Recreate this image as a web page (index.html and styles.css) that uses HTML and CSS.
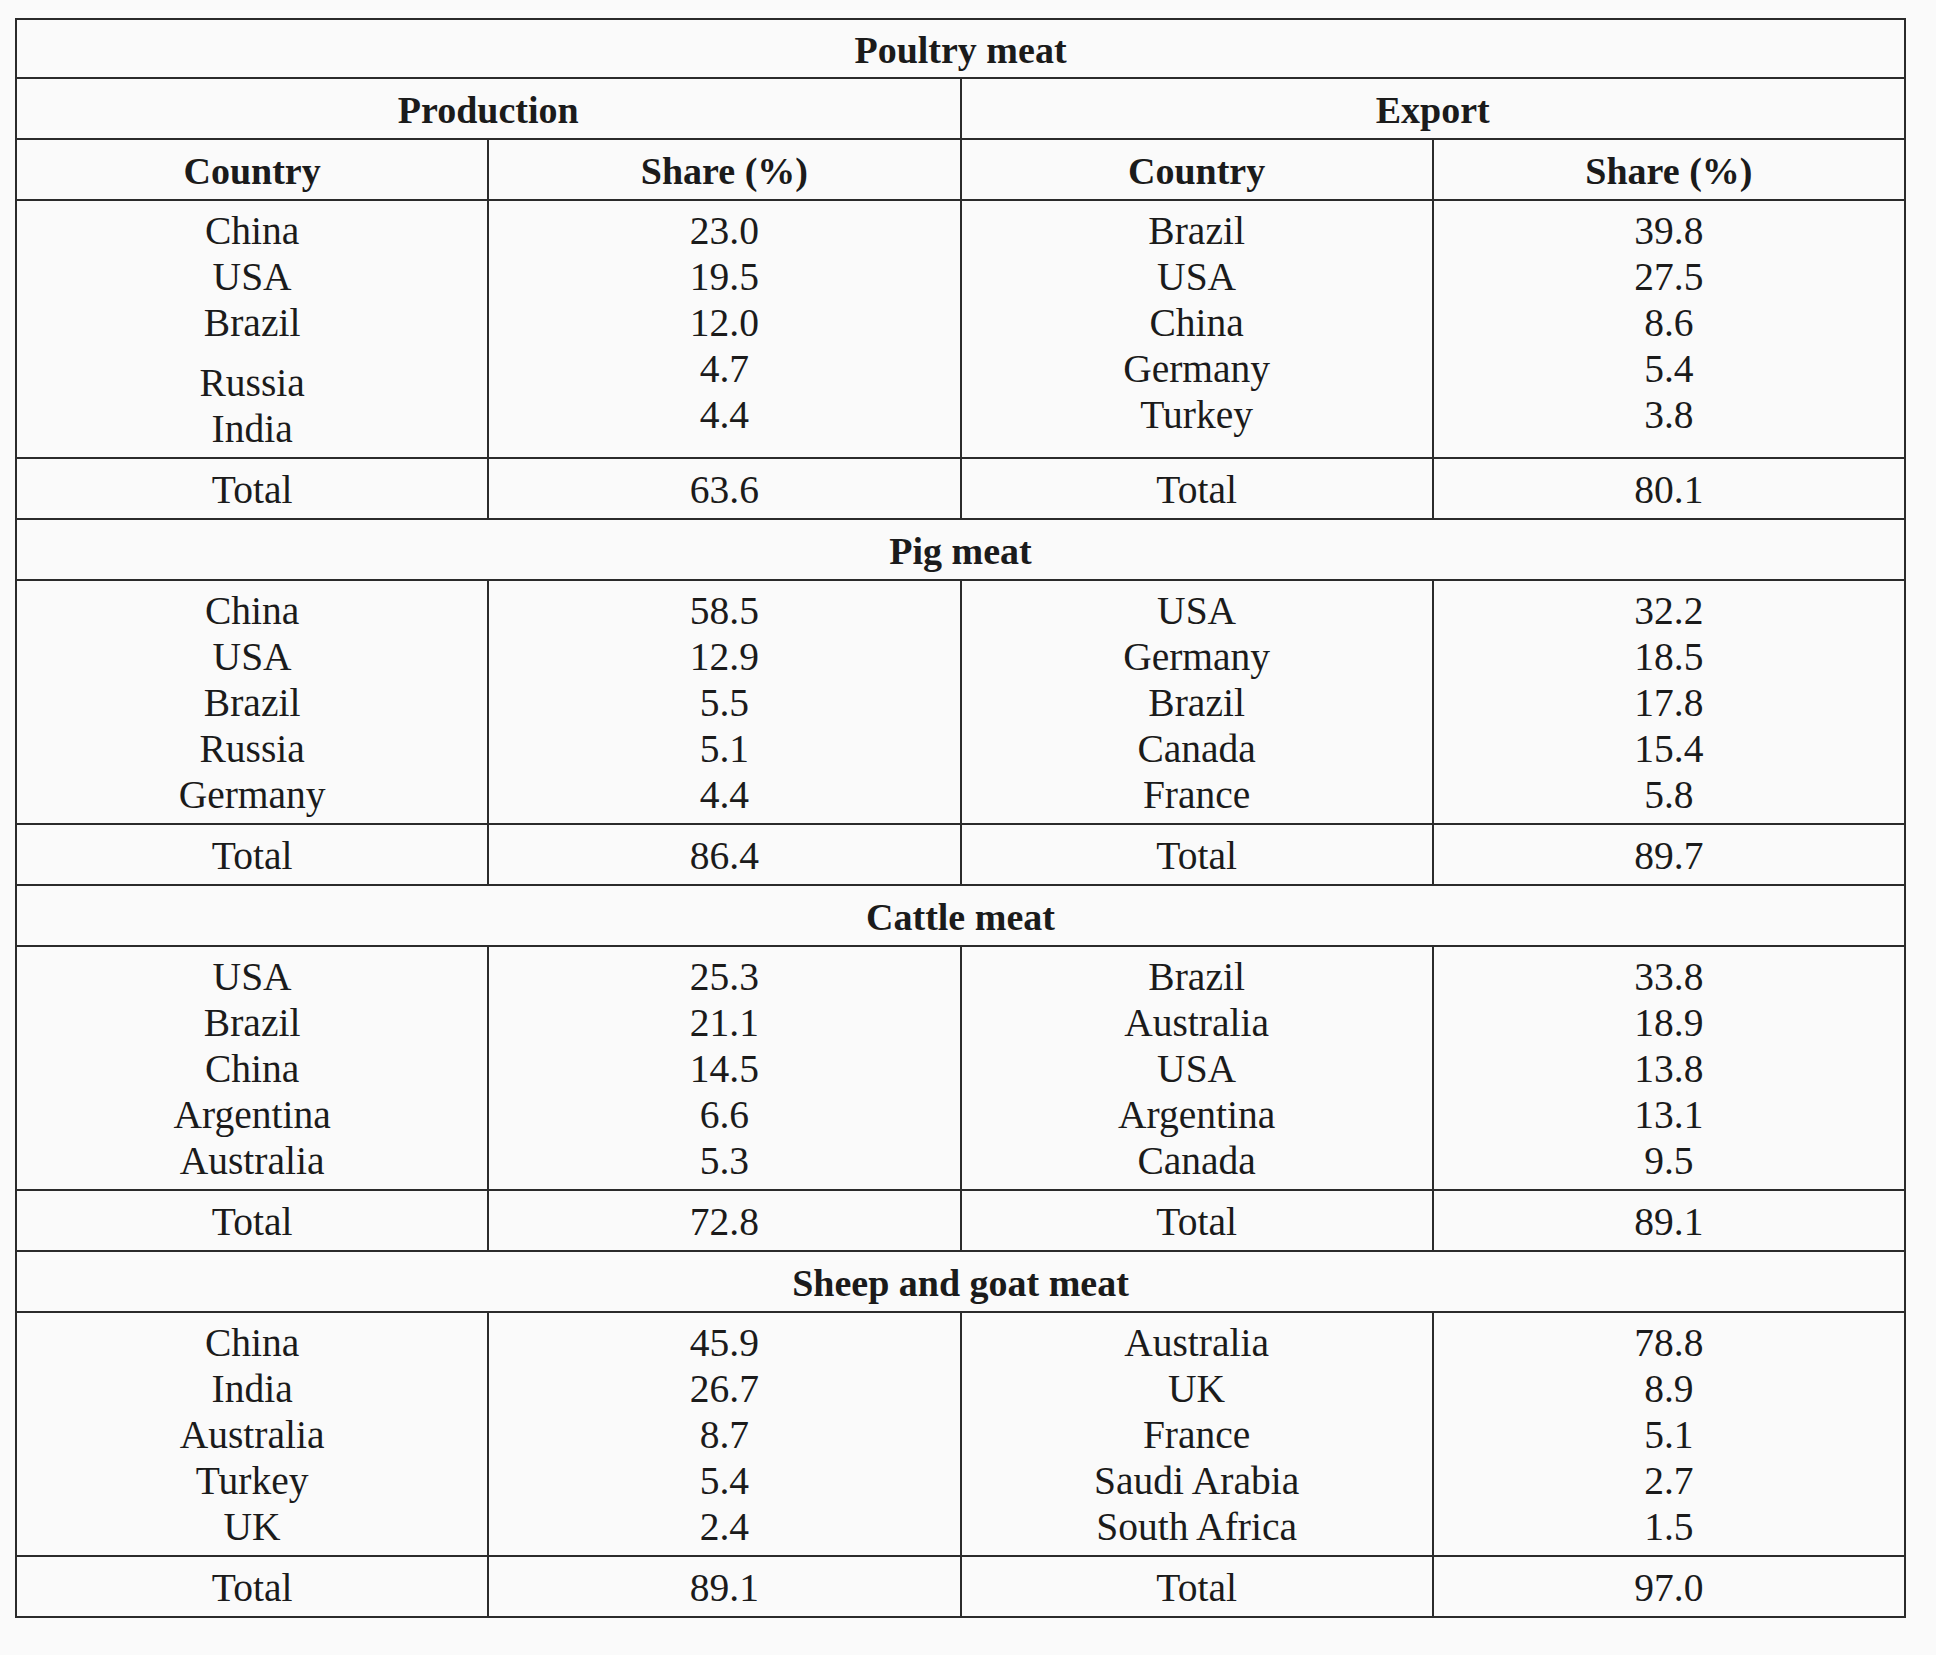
FILE: index.html
```html
<!DOCTYPE html>
<html lang="en">
<head>
<meta charset="utf-8">
<title>Meat production and export shares</title>
<link rel="stylesheet" href="styles.css">
</head>
<body>
<div class="page">
<table class="meat">
  <colgroup><col class="c"><col class="c"><col class="c"><col class="c"></colgroup>
  <tr class="first"><th colspan="4">Poultry meat</th></tr>
  <tr><th colspan="2">Production</th><th colspan="2">Export</th></tr>
  <tr><th>Country</th><th>Share (%)</th><th>Country</th><th>Share (%)</th></tr>
  <tr class="data">
    <td class="gap"><div>China</div><div>USA</div><div>Brazil</div><div class="shift">Russia</div><div>India</div></td>
    <td><div>23.0</div><div>19.5</div><div>12.0</div><div>4.7</div><div>4.4</div></td>
    <td><div>Brazil</div><div>USA</div><div>China</div><div>Germany</div><div>Turkey</div></td>
    <td><div>39.8</div><div>27.5</div><div>8.6</div><div>5.4</div><div>3.8</div></td>
  </tr>
  <tr class="total"><td>Total</td><td>63.6</td><td>Total</td><td>80.1</td></tr>

  <tr><th colspan="4">Pig meat</th></tr>
  <tr class="data">
    <td><div>China</div><div>USA</div><div>Brazil</div><div>Russia</div><div>Germany</div></td>
    <td><div>58.5</div><div>12.9</div><div>5.5</div><div>5.1</div><div>4.4</div></td>
    <td><div>USA</div><div>Germany</div><div>Brazil</div><div>Canada</div><div>France</div></td>
    <td><div>32.2</div><div>18.5</div><div>17.8</div><div>15.4</div><div>5.8</div></td>
  </tr>
  <tr class="total"><td>Total</td><td>86.4</td><td>Total</td><td>89.7</td></tr>

  <tr><th colspan="4">Cattle meat</th></tr>
  <tr class="data">
    <td><div>USA</div><div>Brazil</div><div>China</div><div>Argentina</div><div>Australia</div></td>
    <td><div>25.3</div><div>21.1</div><div>14.5</div><div>6.6</div><div>5.3</div></td>
    <td><div>Brazil</div><div>Australia</div><div>USA</div><div>Argentina</div><div>Canada</div></td>
    <td><div>33.8</div><div>18.9</div><div>13.8</div><div>13.1</div><div>9.5</div></td>
  </tr>
  <tr class="total"><td>Total</td><td>72.8</td><td>Total</td><td>89.1</td></tr>

  <tr><th colspan="4">Sheep and goat meat</th></tr>
  <tr class="data">
    <td><div>China</div><div>India</div><div>Australia</div><div>Turkey</div><div>UK</div></td>
    <td><div>45.9</div><div>26.7</div><div>8.7</div><div>5.4</div><div>2.4</div></td>
    <td><div>Australia</div><div>UK</div><div>France</div><div>Saudi Arabia</div><div>South Africa</div></td>
    <td><div>78.8</div><div>8.9</div><div>5.1</div><div>2.7</div><div>1.5</div></td>
  </tr>
  <tr class="total"><td>Total</td><td>89.1</td><td>Total</td><td>97.0</td></tr>
</table>
</div>
</body>
</html>
```

FILE: styles.css
```css
html, body {
  margin: 0;
  padding: 0;
  background: #fafafa;
}

.page {
  padding: 18px 0 0 15px;
}

.meat {
  width: 1891px;
  table-layout: fixed;
  border-collapse: separate;
  border-spacing: 0;
  border-top: 2px solid #2b2b2b;
  border-left: 2px solid #2b2b2b;
  font-family: "Liberation Serif", "Times New Roman", serif;
  color: #1b1b1b;
}

.meat .c {
  width: 25%;
}

.meat th,
.meat td {
  border-right: 2px solid #2b2b2b;
  border-bottom: 2px solid #2b2b2b;
  text-align: center;
  vertical-align: top;
  line-height: 46px;
  padding: 8px 0 5px;
}

.meat th {
  font-weight: bold;
  font-size: 38px;
}

.meat td {
  font-size: 39.5px;
}

.meat tr.first th {
  padding: 7px 0 4px;
}

.meat tr.data td {
  padding: 7px 0 5px;
}

.meat tr.data td.gap {
  padding-bottom: 5px;
}

.meat .shift {
  margin-top: 14px;
}
```
